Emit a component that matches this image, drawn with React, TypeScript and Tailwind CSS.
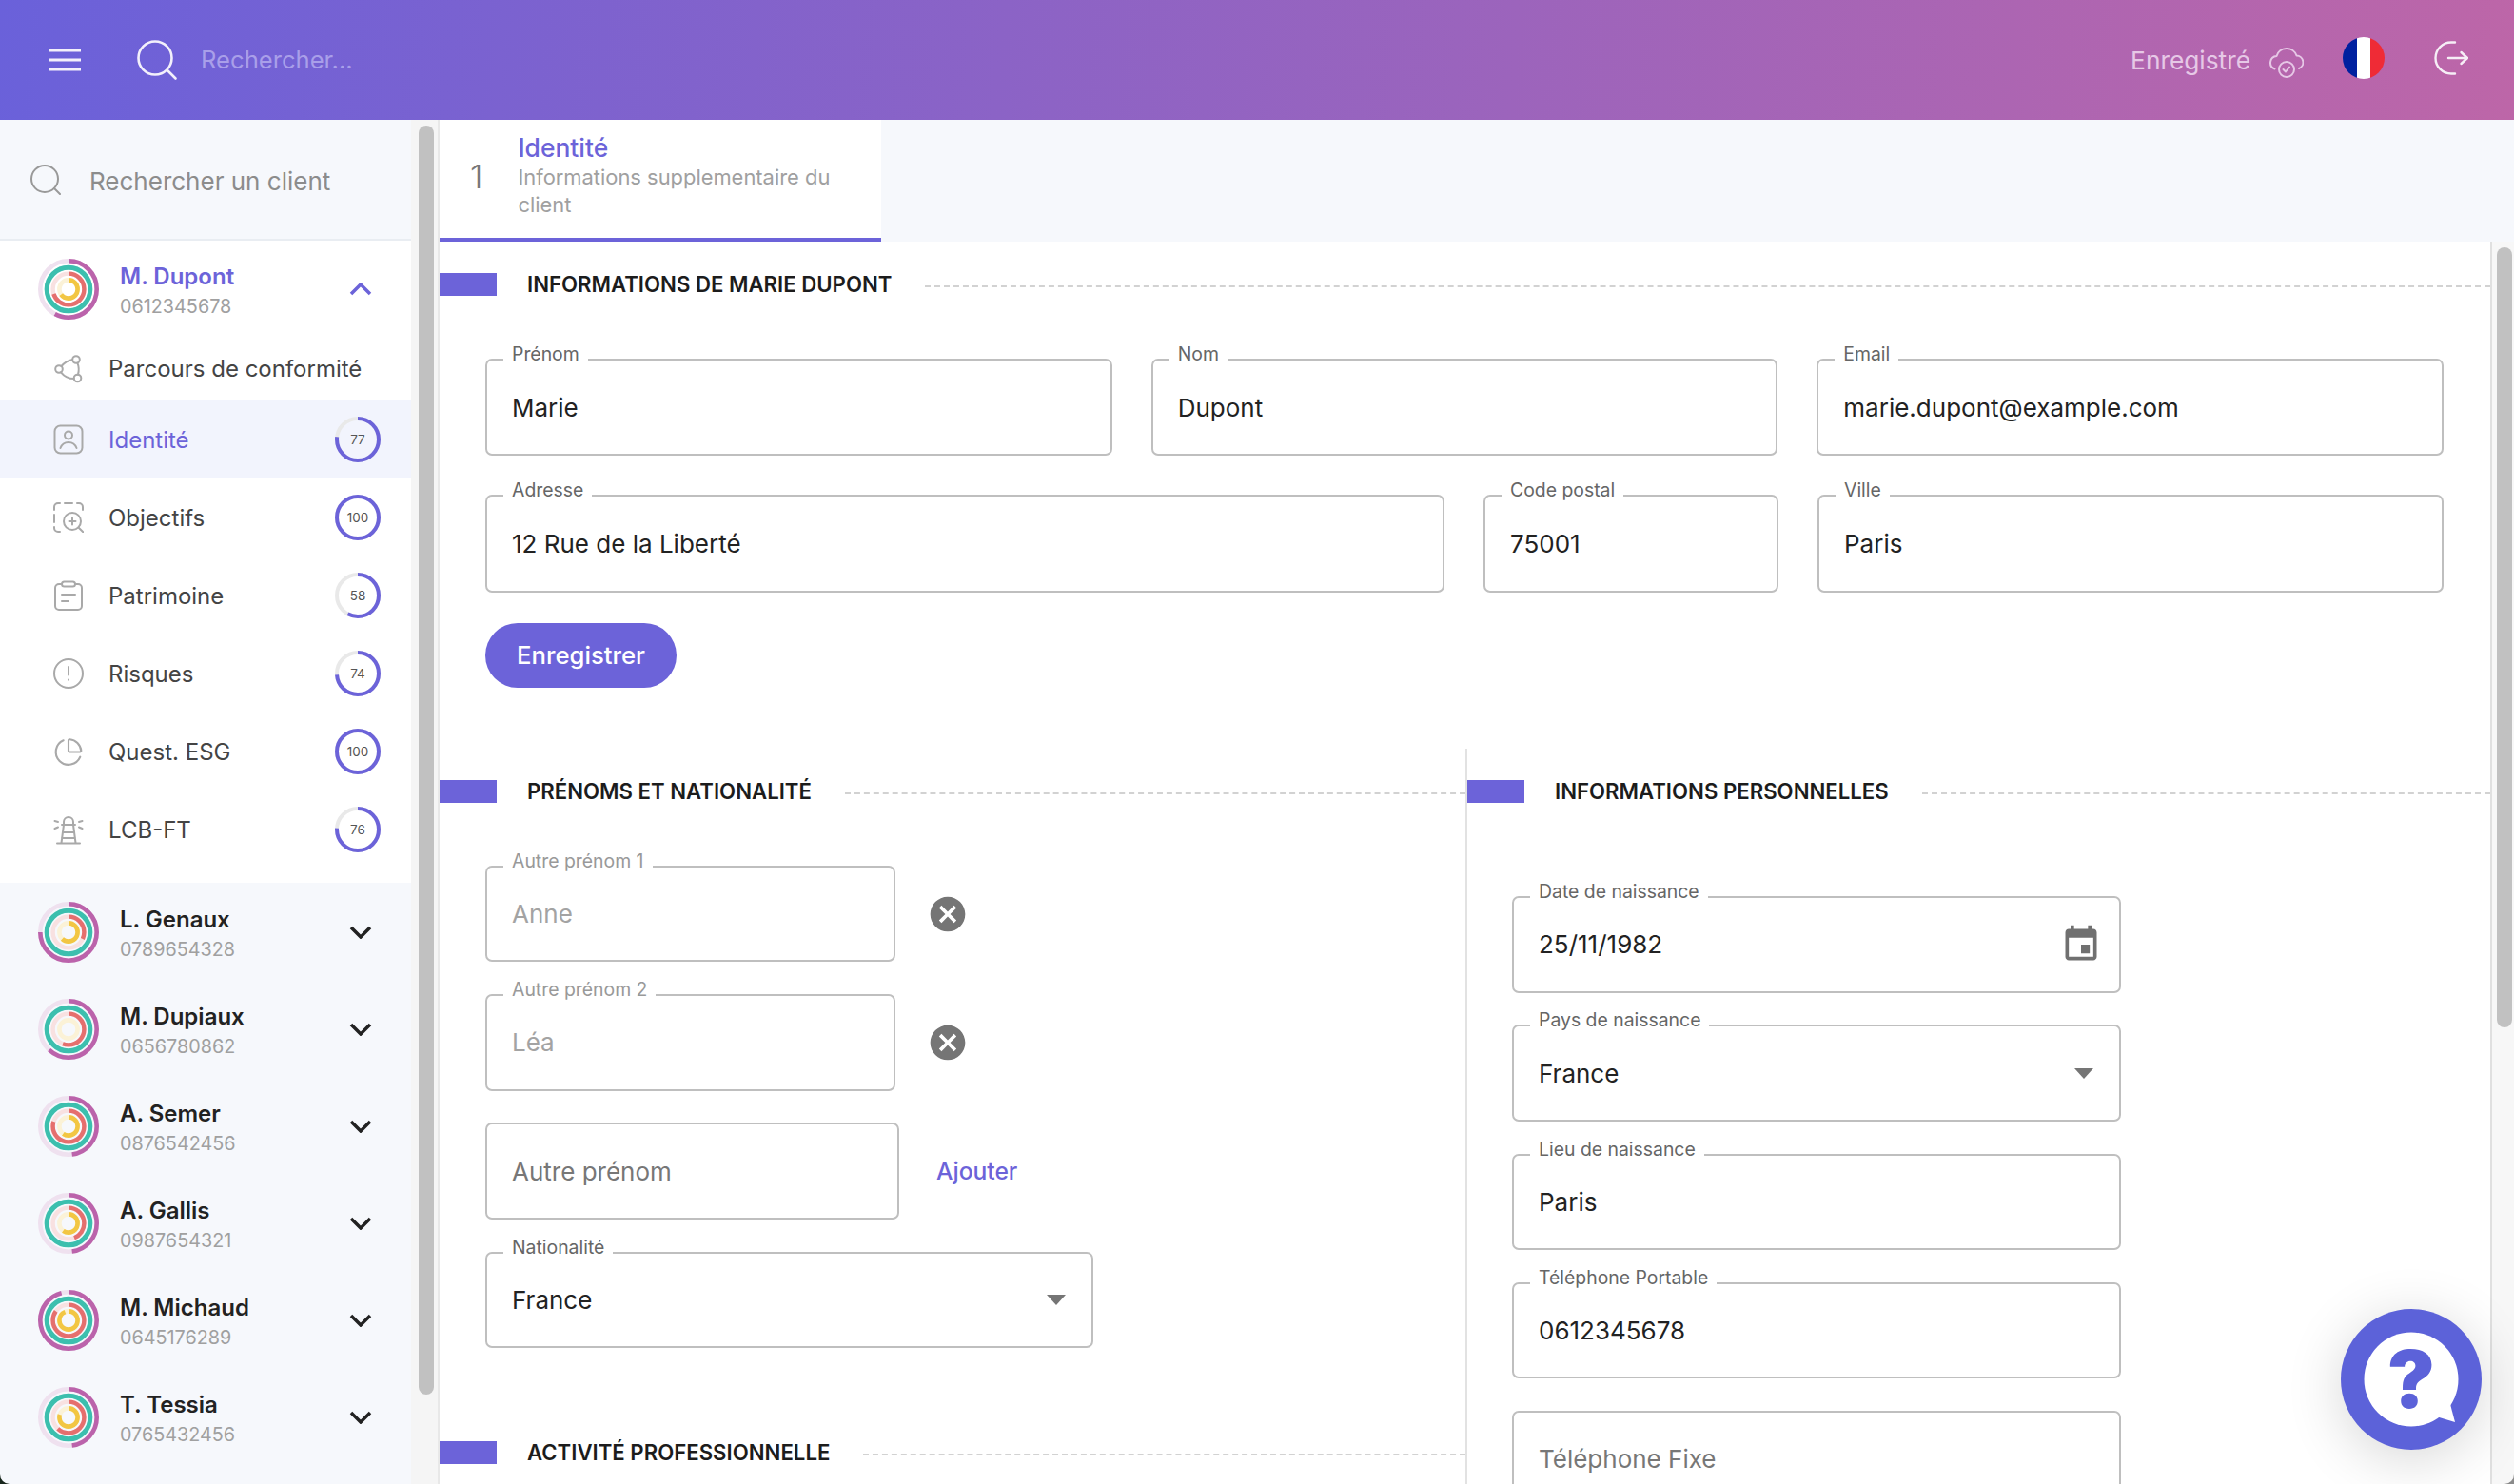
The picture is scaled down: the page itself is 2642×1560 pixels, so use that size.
import React from "react";
import { ChartPie } from "lucide-react";

const clients = [
  { name: "L. Genaux", phone: "0789654328", rings: [75, 32, 62] },
  { name: "M. Dupiaux", phone: "0656780862", rings: [62, 56, 0] },
  { name: "A. Semer", phone: "0876542456", rings: [48, 80, 60] },
  { name: "A. Gallis", phone: "0987654321", rings: [48, 44, 60] },
  { name: "M. Michaud", phone: "0645176289", rings: [96, 85, 94] },
  { name: "T. Tessia", phone: "0765432456", rings: [48, 62, 80] },
];

function Ring({ r, width, color, track, value }: { r: number; width: number; color: string; track: string; value: number }) {
  return (
    <>
      <circle cx="32" cy="32" r={r} fill="none" stroke={track} strokeWidth={width} />
      {value > 0 && (
        <circle
          cx="32"
          cy="32"
          r={r}
          fill="none"
          stroke={color}
          strokeWidth={width}
          pathLength={100}
          strokeDasharray={`${value} 100`}
          transform="rotate(-90 32 32)"
        />
      )}
    </>
  );
}

function ClientRings({ rings }: { rings: number[] }) {
  return (
    <svg viewBox="0 0 64 64" className="w-[64px] h-[64px] shrink-0">
      <Ring r={29.7} width={4.6} color="#bb63ab" track="#efe1ef" value={rings[0]} />
      <Ring r={22.8} width={5} color="#3cbfae" track="#d8f2ee" value={100} />
      <Ring r={16.4} width={4.4} color="#e56f6e" track="#f8e1e1" value={rings[1]} />
      <Ring r={9.6} width={4.6} color="#f2c643" track="#fbf2d7" value={rings[2]} />
    </svg>
  );
}

function Progress({ value }: { value: number }) {
  return (
    <div className="relative w-[48px] h-[48px] flex items-center justify-center">
      <svg viewBox="0 0 48 48" className="absolute inset-0 w-[48px] h-[48px]">
        <circle cx="24" cy="24" r="22" fill="none" stroke="#e9e9e9" strokeWidth="4" />
        <circle
          cx="24"
          cy="24"
          r="22"
          fill="none"
          stroke="#6c63d9"
          strokeWidth="4"
          pathLength={100}
          strokeDasharray={`${value} 100`}
          transform="rotate(-90 24 24)"
        />
      </svg>
      <span className="text-[13.5px] text-[#555]">{value}</span>
    </div>
  );
}

const iconProps = {
  viewBox: "0 0 32 32",
  fill: "none",
  stroke: "#a9a9a9",
  strokeWidth: 2,
  strokeLinecap: "round" as const,
  strokeLinejoin: "round" as const,
  className: "w-[32px] h-[32px]",
};

const navItems: { label: string; value?: number; active?: boolean; icon: React.ReactNode }[] = [
  {
    label: "Parcours de conformité",
    icon: (
      <svg {...iconProps}>
        <circle cx="24" cy="6" r="3.8" />
        <circle cx="25.5" cy="25.5" r="3.8" />
        <circle cx="6" cy="16" r="3.8" />
        <path d="M8.5 13c3-3.500 6.500-6 11.700-7M25.500 9.800c1.500 3.500 1.500 8 .5 11.900M8 19.300c3 3.700 7.500 6.700 13.800 6.700" />
      </svg>
    ),
  },
  {
    label: "Identité",
    active: true,
    value: 77,
    icon: (
      <svg {...iconProps}>
        <rect x="1.500" y="1.500" width="29" height="29" rx="6" />
        <circle cx="16" cy="11.500" r="4" />
        <path d="M7.500 25c1.500-4 4.500-6 8.500-6s7 2 8.500 6" />
      </svg>
    ),
  },
  {
    label: "Objectifs",
    value: 100,
    icon: (
      <svg {...iconProps}>
        <path d="M1 8V5a4 4 0 0 1 4-4h2M12 1h8M25 1h2a4 4 0 0 1 4 4v3M1 13v8M1 26v1a4 4 0 0 0 4 4h2" />
        <circle cx="20" cy="20" r="9" />
        <path d="M20 16.500v7M16.500 20h7M26.500 26.500 31.500 31.500" />
      </svg>
    ),
  },
  {
    label: "Patrimoine",
    value: 58,
    icon: (
      <svg {...iconProps}>
        <path d="M9 4H6a4 4 0 0 0-4 4v19a4 4 0 0 0 4 4h20a4 4 0 0 0 4-4V8a4 4 0 0 0-4-4h-3" />
        <rect x="9" y="1.500" width="14" height="5" rx="2.500" />
        <path d="M9 15h14M9 22h7" />
      </svg>
    ),
  },
  {
    label: "Risques",
    value: 74,
    icon: (
      <svg {...iconProps}>
        <circle cx="16" cy="16" r="15" />
        <path d="M16 9v8.500M16 22.500v.200" />
      </svg>
    ),
  },
  {
    label: "Quest. ESG",
    value: 100,
    icon: <ChartPie size={37} strokeWidth={1.6} color="#a9a9a9" />,
  },
  {
    label: "LCB-FT",
    value: 76,
    icon: (
      <svg {...iconProps}>
        <path d="M11 11V8a5 5 0 0 1 10 0v3M9 11h14M11 11 8.500 30M21 11l2.500 19M4 30.500h24M10 19h12M9 25h14" />
        <path d="M1.500 7 5 8M1.500 15 5 13.500M27 8l3.500-1M27 13.500l3.500 1.500" />
      </svg>
    ),
  },
];

function Field({
  label,
  value,
  muted,
  placeholder,
  className,
  right,
}: {
  label?: string;
  value: string;
  muted?: boolean;
  placeholder?: boolean;
  className: string;
  right?: React.ReactNode;
}) {
  return (
    <div className={`relative flex items-center justify-between border-2 border-[#bfbfbf] rounded-[7px] pl-[26px] pr-[26px] shrink-0 ${className}`}>
      {label && (
        <span className={`absolute -top-[21px] left-[17px] bg-white px-[9px] text-[19.4px] leading-[28px] ${muted ? "text-[#999]" : "text-[#666]"}`}>
          {label}
        </span>
      )}
      <span className={`text-[26px] ${muted ? "text-[#a3a3a3]" : placeholder ? "text-[#777]" : "text-[#222]"}`}>{value}</span>
      {right}
    </div>
  );
}

function SectionTitle({ title, className }: { title: string; className?: string }) {
  return (
    <div className={`flex items-center h-[24px] ${className ?? ""}`}>
      <div className="w-[60px] h-[24px] bg-[#6c63d9] shrink-0" />
      <h2 className="ml-[32px] text-[22.2px] font-semibold text-[#1c1c1c] whitespace-nowrap">{title}</h2>
      <div className="ml-[35px] mt-[4px] flex-1 border-t-2 border-dashed border-[#d2d2d2]" />
    </div>
  );
}

function CancelIcon() {
  return (
    <svg viewBox="0 0 24 24" className="w-[44px] h-[44px] shrink-0" fill="#757575">
      <path d="M12 2C6.470 2 2 6.470 2 12s4.470 10 10 10 10-4.470 10-10S17.530 2 12 2zm5 13.590L15.590 17 12 13.410 8.410 17 7 15.590 10.590 12 7 8.410 8.410 7 12 10.590 15.590 7 17 8.410 13.410 12 17 15.590z" />
    </svg>
  );
}

function SelectArrow() {
  return (
    <svg viewBox="0 0 20 11" className="w-[20px] h-[11px] mr-[1px]" fill="#757575">
      <path d="M0 0h20L10 11z" />
    </svg>
  );
}

export default function App() {
  return (
    <div className="relative w-[2642px] h-[1560px] overflow-hidden flex flex-col bg-white font-[Inter,sans-serif]">
      {/* HEADER */}
      <header className="h-[126px] shrink-0 flex items-center bg-[linear-gradient(95deg,#6a61da,#bd66a8)] pl-[51px] pr-[48px]">
        <svg viewBox="0 0 34 24" className="w-[34px] h-[24px]" stroke="#f3f0fb" strokeWidth="3">
          <path d="M0 2h34M0 12h34M0 22h34" />
        </svg>
        <svg viewBox="0 0 44 44" className="ml-[58px] w-[44px] h-[44px]" fill="none" stroke="#f3f0fb" strokeWidth="2.600" strokeLinecap="round">
          <circle cx="20" cy="20" r="17.500" />
          <path d="M33 33l8.500 8.500" />
        </svg>
        <span className="ml-[24px] text-[25.6px] text-[#a99fe9]">Rechercher...</span>
        <div className="ml-auto flex items-center">
          <span className="mt-[2px] text-[26.3px] text-[#e6c8e6]">Enregistré</span>
          <svg viewBox="0 0 36 36" className="ml-[20px] mt-[2px] w-[36px] h-[36px]" fill="none" stroke="#e6c8e6" strokeWidth="2" strokeLinecap="round" strokeLinejoin="round">
            <path d="M5.500 26.500A7 7 0 0 1 7.500 13A11 11 0 0 1 28.500 12.500A7 7 0 0 1 31 26" />
            <circle cx="18" cy="27" r="8" />
            <path d="M14.500 27l2.500 2.500 4-5" />
          </svg>
          <div className="ml-[41px] mb-[4px] w-[44px] h-[44px] rounded-full overflow-hidden grid grid-cols-3">
            <div className="bg-[#00209f]" />
            <div className="bg-white" />
            <div className="bg-[#ef2b36]" />
          </div>
          <svg viewBox="0 0 36 36" className="ml-[52px] mb-[4px] w-[36px] h-[36px]" fill="none" stroke="#f6eef6" strokeWidth="2.400" strokeLinecap="round" strokeLinejoin="round">
            <path d="M22 1.500H18a16.500 16.500 0 0 0 0 33h4M15 18h20M28.500 12l6.500 6-6.500 6" />
          </svg>
        </div>
      </header>

      <div className="flex-1 flex min-h-0">
        {/* SIDEBAR */}
        <aside className="w-[432px] shrink-0 bg-[#f6f8fc] flex flex-col">
          <div className="h-[127px] shrink-0 flex items-center pl-[32px] border-b-2 border-[#e9edf2]">
            <svg viewBox="0 0 32 32" className="w-[32px] h-[32px]" fill="none" stroke="#999" strokeWidth="2" strokeLinecap="round">
              <circle cx="15" cy="15" r="14" />
              <path d="M25 25l6 6" />
            </svg>
            <span className="ml-[30px] mt-[3px] text-[26px] text-[#8c8c8c]">Rechercher un client</span>
          </div>

          <div className="bg-white h-[675px] shrink-0">
            <div className="h-[101px] flex items-center pl-[40px] pr-[41px]">
              <ClientRings rings={[58, 70, 65]} />
              <div className="ml-[22px] flex-1 mt-[5px]">
                <div className="text-[24px] leading-[32px] font-semibold text-[#6c63d9]">M. Dupont</div>
                <div className="text-[19.8px] leading-[30px] text-[#a0a0a0]">0612345678</div>
              </div>
              <svg viewBox="0 0 24 14" className="w-[24px] h-[14px]" fill="none" stroke="#6c63d9" strokeWidth="3.500">
                <path d="M2 12 12 2l10 10" />
              </svg>
            </div>
            {navItems.map((item, i) => (
              <div
                key={item.label}
                className={`${i === 0 ? "h-[67px]" : "h-[82px]"} flex items-center pl-[56px] pr-[32px] ${item.active ? "bg-[#f2f4fd]" : ""}`}
              >
                <div className="w-[32px] h-[32px] flex items-center justify-center">{item.icon}</div>
                <span className={`ml-[26px] mt-[1px] flex-1 text-[24px] ${item.active ? "text-[#6c63d9]" : "text-[#444]"}`}>{item.label}</span>
                {item.value !== undefined && <Progress value={item.value} />}
              </div>
            ))}
          </div>

          <div className="pt-[1px]">
            {clients.map((c) => (
              <div key={c.name} className="h-[102px] flex items-center pl-[40px] pr-[41px]">
                <ClientRings rings={c.rings} />
                <div className="ml-[22px] flex-1 mt-[4px]">
                  <div className="text-[24px] leading-[32px] font-semibold text-[#222]">{c.name}</div>
                  <div className="text-[19.8px] leading-[30px] text-[#a0a0a0]">{c.phone}</div>
                </div>
                <svg viewBox="0 0 24 14" className="w-[24px] h-[14px]" fill="none" stroke="#222" strokeWidth="3.500">
                  <path d="M2 2l10 10L22 2" />
                </svg>
              </div>
            ))}
          </div>
        </aside>

        {/* SIDEBAR SCROLLBAR */}
        <div className="w-[30px] shrink-0 bg-[#f5f5f5] border-r-2 border-[#e8e8e8] pl-[8px] pt-[6px]">
          <div className="w-[16px] h-[1334px] rounded-full bg-[#c1c1c1]" />
        </div>

        {/* MAIN */}
        <main className="flex-1 min-w-0 flex flex-col bg-[#f6f8fc]">
          <div className="h-[128px] shrink-0 flex">
            <div className="w-[464px] h-[128px] bg-white border-b-4 border-[#6c63d9] flex items-center pl-[32px]">
              <span className="mb-[6px] text-[34px] text-[#777] font-light">1</span>
              <div className="ml-[37px] mb-[8px]">
                <div className="text-[26.4px] leading-[34px] font-medium text-[#6c63d9]">Identité</div>
                <div className="text-[21.9px] leading-[29px] text-[#a0a0a0]">
                  Informations supplementaire du
                  <br />
                  client
                </div>
              </div>
            </div>
          </div>

          <div className="flex-1 min-h-0 flex">
            <div className="flex-1 min-w-0 bg-white">
              <div className="pt-[33px]">
                <SectionTitle title="INFORMATIONS DE MARIE DUPONT" />
                <div className="pl-[48px] pr-[49px] mt-[66px]">
                  <div className="grid grid-cols-3 gap-x-[41px]">
                    <Field label="Prénom" value="Marie" className="h-[102px]" />
                    <Field label="Nom" value="Dupont" className="h-[102px]" />
                    <Field label="Email" value="marie.dupont@example.com" className="h-[102px]" />
                  </div>
                  <div className="mt-[41px] grid grid-cols-[1008px_310px_1fr] gap-x-[41px]">
                    <Field label="Adresse" value="12 Rue de la Liberté" className="h-[103px]" />
                    <Field label="Code postal" value="75001" className="h-[103px]" />
                    <Field label="Ville" value="Paris" className="h-[103px]" />
                  </div>
                  <button className="mt-[32px] w-[201px] h-[68px] rounded-full bg-[#6c63d9] text-white text-[25.7px] font-medium">Enregistrer</button>
                </div>
              </div>

              <div className="mt-[64px] flex">
                {/* LEFT COLUMN */}
                <div className="w-[1078px] shrink-0 pt-[33px]">
                  <SectionTitle title="PRÉNOMS ET NATIONALITÉ" />
                  <div className="pl-[48px] mt-[66px] flex flex-col gap-[33.5px]">
                    <div className="flex items-center">
                      <Field label="Autre prénom 1" value="Anne" muted className="w-[431px] h-[101px]" />
                      <div className="ml-[33px]">
                        <CancelIcon />
                      </div>
                    </div>
                    <div className="flex items-center">
                      <Field label="Autre prénom 2" value="Léa" muted className="w-[431px] h-[102px]" />
                      <div className="ml-[33px]">
                        <CancelIcon />
                      </div>
                    </div>
                    <div className="flex items-center">
                      <Field value="Autre prénom" placeholder className="w-[435px] h-[102px]" />
                      <span className="ml-[39px] text-[24.6px] font-medium text-[#6c63d9]">Ajouter</span>
                    </div>
                    <Field label="Nationalité" value="France" className="w-[639px] h-[101px]" right={<SelectArrow />} />
                  </div>
                  <SectionTitle title="ACTIVITÉ PROFESSIONNELLE" className="mt-[98px]" />
                </div>

                {/* RIGHT COLUMN */}
                <div className="flex-1 min-w-0 border-l-2 border-[#e2e2e2] pt-[33px]">
                  <SectionTitle title="INFORMATIONS PERSONNELLES" />
                  <div className="pl-[47px] mt-[98px] flex flex-col gap-[33.8px]">
                    <Field
                      label="Date de naissance"
                      value="25/11/1982"
                      className="w-[640px] h-[101.500px] !pr-[18px]"
                      right={
                        <svg viewBox="0 0 24 24" className="w-[44px] h-[44px]" fill="#707070">
                          <path d="M17 12h-5v5h5v-5zM16 1v2H8V1H6v2H5c-1.110 0-1.990.9-1.990 2L3 19c0 1.100.890 2 2 2h14c1.100 0 2-.9 2-2V5c0-1.100-.9-2-2-2h-1V1h-2zm3 18H5V8h14v11z" />
                        </svg>
                      }
                    />
                    <Field label="Pays de naissance" value="France" className="w-[640px] h-[101.500px]" right={<SelectArrow />} />
                    <Field label="Lieu de naissance" value="Paris" className="w-[640px] h-[101.500px]" />
                    <Field label="Téléphone Portable" value="0612345678" className="w-[640px] h-[101.500px]" />
                    <Field value="Téléphone Fixe" placeholder className="w-[640px] h-[101.500px]" />
                  </div>
                </div>
              </div>
            </div>

            {/* CONTENT SCROLLBAR */}
            <div className="w-[25px] shrink-0 bg-[#f7f7f7] border-l-2 border-[#e0e0e0] pl-[5px] pt-[6px]">
              <div className="w-[16px] h-[820px] rounded-full bg-[#c1c1c1]" />
            </div>
          </div>
        </main>
      </div>

      {/* HELP BUTTON */}
      <button className="absolute left-[2460px] top-[1376px] w-[148px] h-[148px] rounded-full bg-[#5c62d9] flex items-center justify-center shadow-[0_10px_60px_rgba(0,0,0,0.16)]">
        <svg viewBox="0 0 148 148" className="absolute inset-0 w-[148px] h-[148px]" fill="#fff">
          <circle cx="74" cy="74" r="49.500" />
          <path d="M115 100 120 119 100 113z" />
        </svg>
        <span className="relative text-[84px] leading-none font-black text-[#5c62d9]">?</span>
      </button>

      {/* WINDOW CORNERS */}
      <svg viewBox="0 0 10 10" className="absolute left-0 bottom-0 w-[10px] h-[10px]" fill="#18261c">
        <path d="M0 0v10h10A10 10 0 0 1 0 0z" />
      </svg>
      <svg viewBox="0 0 10 10" className="absolute right-0 bottom-0 w-[10px] h-[10px]" fill="#8a8a8a">
        <path d="M10 0v10H0A10 10 0 0 0 10 0z" />
      </svg>
    </div>
  );
}
